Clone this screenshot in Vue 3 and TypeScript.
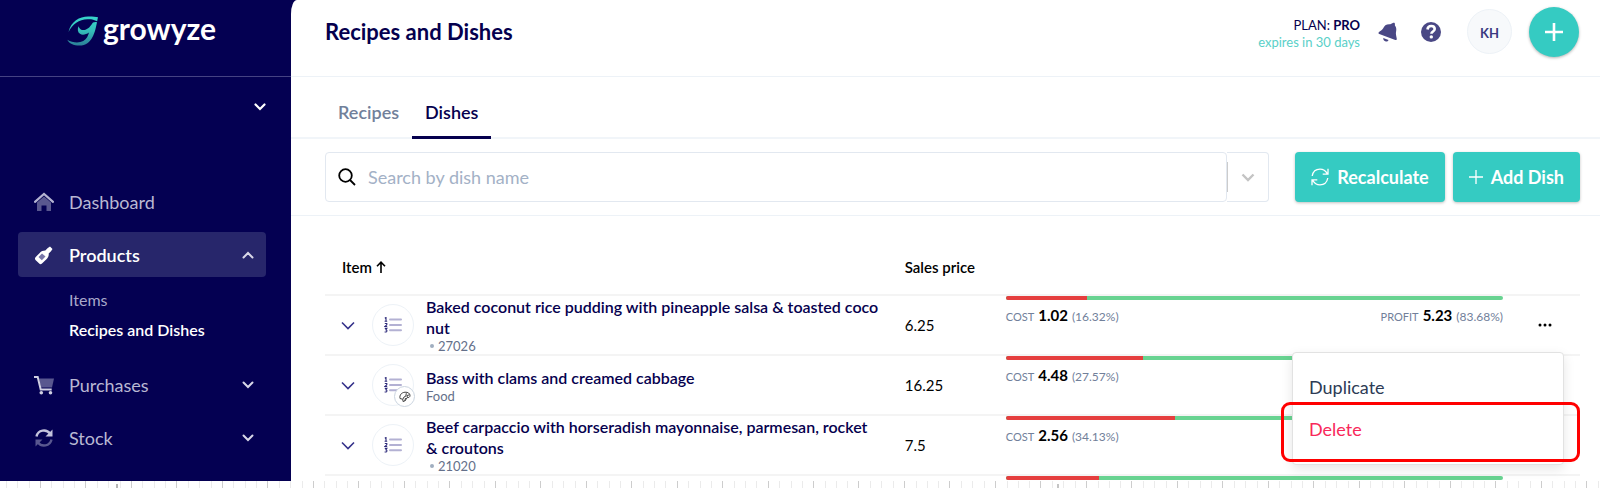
<script setup lang="ts">
import { ref } from 'vue'

interface Dish {
  name: string
  code?: string
  category?: string
  price: string
  cost: string
  costShare: number
  profit: string
  profitShare: number
}

const dishes: Dish[] = [
  { name: 'Baked coconut rice pudding with pineapple salsa & toasted coco\nnut', code: '27026', price: '6.25', cost: '1.02', costShare: 16.32, profit: '5.23', profitShare: 83.68 },
  { name: 'Bass with clams and creamed cabbage', category: 'Food', price: '16.25', cost: '4.48', costShare: 27.57, profit: '', profitShare: 72.43 },
  { name: 'Beef carpaccio with horseradish mayonnaise, parmesan, rocket\n& croutons', code: '21020', price: '7.5', cost: '2.56', costShare: 34.13, profit: '', profitShare: 65.87 },
]
const nextShare = 18.8

const search = ref('')
const openMenu = ref(0)

const majorTicks = Array.from({ length: 60 }, (_, i) => 40 + Math.round(i * 45.47))
const minorTicks = Array.from({ length: 240 }, (_, i) => i)
  .filter((i) => i % 4 !== 3)
  .map((i) => 6 + Math.round(i * 11.37))
</script>

<template>
  <div class="screen">
    <div class="app">
      <aside class="sidebar">
        <a class="brand" href="#">
          <svg class="brand-mark" viewBox="0 0 32 30" aria-hidden="true">
            <defs>
              <linearGradient id="mark" x1="0" y1="0" x2="0" y2="1">
                <stop offset="0" stop-color="#38d6cc" />
                <stop offset="0.5" stop-color="#34bdb9" />
                <stop offset="1" stop-color="#2c7f98" />
              </linearGradient>
            </defs>
            <path fill="url(#mark)" d="M1.500 16C4 5 13 .2 22 .5c4 0 7 .3 9 .8-.5 1.300-.4 2.600-.8 4-3.200-1.700-6-2.300-9.700-2.100C12 3.500 5.500 8 1.500 16zM30 6.200c-1.800 9-4.500 23.300-17.500 23.300C6.500 29.500 2 27.500.3 23.700c4.700 3 11.700 3.600 16 1.300 3.500-1.900 4.900-5.500 5.700-8.500-3 2.200-6.800 2.800-9 1.300-2.400-1.600-2.700-4.600-1.500-7.600 1.200 3.300 4 4.600 7 3.500C22.500 12.400 24.500 8.500 26 6.500c1.300-.6 2.800-.7 4-.3z" />
          </svg>
          <span class="brand-name">growyze</span>
        </a>
        <button class="venue" type="button" aria-label="Choose venue">
          <svg class="chev" viewBox="0 0 12 8" aria-hidden="true"><path d="M1.500 1.500 6 6l4.500-4.500" stroke-width="2.200" /></svg>
        </button>
        <nav class="nav">
          <a class="nav-item" href="#">
            <svg class="nav-icon" viewBox="0 0 20 20" aria-hidden="true">
              <path d="M3 10.500 10 4.500l7 6V19h-4.500v-5.500h-5V19H3z" fill="#59578f" />
              <path d="M1 9.800 10 2l9 7.800" fill="none" stroke="#b4b3d2" stroke-width="2.200" stroke-linecap="round" />
            </svg>
            <span>Dashboard</span>
          </a>
          <button class="nav-item active" type="button">
            <svg class="nav-icon" viewBox="0 0 20 20" aria-hidden="true">
              <path d="M16 1.500 18.500 4 17 6.200l-2.300 2.300c.3 3-1 4.500-2.500 6L8 18.600c-1 .8-2 .8-2.800 0L1.500 15c-.7-.9-.7-1.900 0-2.800l4.200-4.300c1.600-1.500 3.200-2.300 5.600-2.300l2.500-2.500z" fill="#fff" />
              <path d="m8 8.500 3.500 3-3.700 3.700-3.300-3.300z" fill="#7776a8" />
            </svg>
            <span>Products</span>
            <svg class="chev end" viewBox="0 0 12 8" aria-hidden="true"><path d="M1.500 6.500 6 2l4.500 4.500" stroke-width="2" /></svg>
          </button>
          <ul class="sub">
            <li><a href="#">Items</a></li>
            <li><a class="current" href="#">Recipes and Dishes</a></li>
          </ul>
          <button class="nav-item" type="button">
            <svg class="nav-icon" viewBox="0 0 20 20" aria-hidden="true">
              <path d="M5 3.500h15l-2 9H7z" fill="#59578f" />
              <path d="M0 2h3.700l3 12.500h11" fill="none" stroke="#d0cfe2" stroke-width="2" />
              <circle cx="7.300" cy="17.700" r="1.800" fill="#d0cfe2" /><circle cx="16.500" cy="17.700" r="1.800" fill="#d0cfe2" />
            </svg>
            <span>Purchases</span>
            <svg class="chev end" viewBox="0 0 12 8" aria-hidden="true"><path d="M1.500 1.500 6 6l4.500-4.500" stroke-width="2" /></svg>
          </button>
          <button class="nav-item" type="button">
            <svg class="nav-icon" viewBox="0 0 20 20" aria-hidden="true">
              <path d="M2.500 8.500C4 1.500 12.500.8 16 5.500" fill="none" stroke="#c3c2dc" stroke-width="2.400" />
              <path d="M18.500 1.500v7h-7z" fill="#c3c2dc" />
              <path d="M17.500 11.500c-1.500 7-10 7.700-13.500 3" fill="none" stroke="#59578f" stroke-width="2.400" />
              <path d="M1.500 18.500v-7h7z" fill="#59578f" />
            </svg>
            <span>Stock</span>
            <svg class="chev end" viewBox="0 0 12 8" aria-hidden="true"><path d="M1.500 1.500 6 6l4.500-4.500" stroke-width="2" /></svg>
          </button>
        </nav>
      </aside>

      <main class="main">
        <header class="top">
          <h1>Recipes and Dishes</h1>
          <div class="plan">
            <span>PLAN: <b>PRO</b></span>
            <a href="#">expires in 30 days</a>
          </div>
          <button class="icon-btn bell" type="button" aria-label="Notifications">
            <svg viewBox="0 0 20 20" aria-hidden="true">
              <path d="M15.300.8c.8-.4 1.600.1 1.600 1v1.700c2.200 2.500 1.200 5.500 1 8 .1 2.200.8 3.700.9 5.500 0 1-.7 1.300-1.500 1L1.300 12c-.8-.3-1.100-1.100-.5-1.800 1.500-1.500 3.300-2 4.400-4C6.300 3.500 8.500 1.800 12.300 2.200zM5.300 16l5.200 1.900c-.5 1.300-1.800 1.900-3.200 1.400S5 17.500 5.300 16z" fill="#4a4885" />
            </svg>
          </button>
          <button class="icon-btn help" type="button" aria-label="Help">
            <svg viewBox="0 0 20 20" aria-hidden="true">
              <circle cx="10" cy="10" r="10" fill="#4a4885" />
              <path d="M6.500 7.500C6.800 4.700 8.500 4 10.200 4c2 0 3.500 1.200 3.500 3 0 2.500-3.300 2.500-3.300 4.800" fill="none" stroke="#fff" stroke-width="2.600" />
              <circle cx="10.300" cy="14.900" r="1.700" fill="#fff" />
            </svg>
          </button>
          <button class="avatar" type="button">KH</button>
          <button class="create" type="button" aria-label="Create">
            <svg viewBox="0 0 18 18" aria-hidden="true"><path d="M9 0v18M0 9h18" stroke="#fff" stroke-width="2.600" /></svg>
          </button>
        </header>

        <nav class="tabs">
          <a href="#">Recipes</a>
          <a class="selected" href="#">Dishes</a>
        </nav>

        <div class="toolbar">
          <div class="search">
            <label class="field">
              <svg viewBox="0 0 18 18" aria-hidden="true">
                <circle cx="7.500" cy="7.500" r="6.300" /><path d="m12 12 5 5" />
              </svg>
              <input v-model="search" type="text" placeholder="Search by dish name" aria-label="Search by dish name" />
            </label>
            <button class="filter" type="button" aria-label="Filters">
              <svg viewBox="0 0 14 9" aria-hidden="true"><path d="m1.500 1.500 5.500 5.500 5.500-5.500" /></svg>
            </button>
          </div>
          <button class="primary" type="button">
            <svg viewBox="0 0 18 18" aria-hidden="true">
              <path d="M1.200 8C2 3.500 5.300 1.200 9 1.200c3.300 0 5.800 1.800 7.300 4.600M17 .8v5.400h-5.300M16.800 10c-.8 4.500-4.100 6.800-7.800 6.800-3.300 0-5.800-1.800-7.300-4.600M1 17.200v-5.400h5.300" />
            </svg>
            Recalculate
          </button>
          <button class="primary" type="button">
            <svg class="plus" viewBox="0 0 14 14" aria-hidden="true"><path d="M7 0v14M0 7h14" /></svg>
            Add Dish
          </button>
        </div>

        <div class="list">
          <table>
            <colgroup>
              <col class="c-item" /><col class="c-price" /><col /><col class="c-actions" />
            </colgroup>
            <thead>
              <tr>
                <th scope="col">
                  Item
                  <svg class="sort" viewBox="0 0 10 12" aria-hidden="true"><path d="M5 12V1.500M1 5.200l4-4 4 4" /></svg>
                </th>
                <th scope="col">Sales price</th>
                <td></td>
                <td></td>
              </tr>
            </thead>
            <tbody>
              <tr v-for="(dish, i) in dishes" :key="dish.name">
                <td>
                  <div class="item">
                    <button class="expand" type="button" :aria-label="'Expand ' + dish.name">
                      <svg viewBox="0 0 14 9" aria-hidden="true"><path d="m1 1.500 6 6 6-6" /></svg>
                    </button>
                    <span class="thumb">
                      <svg class="steps" viewBox="0 0 18 16" aria-hidden="true">
                        <path d="M6 2.500h11M6 8h11M6 13.200h11" stroke="#b3b1d3" stroke-width="2" stroke-linecap="round" />
                        <path d="M.8 1.200 2 .5v3.700M.6 4.300h2.600M.8 6.500h2v1.300L.8 9.500h2.400M.8 11.400h2.100l-1 1.400c1.500.2 1.300 2.200-.2 2.200H.6" fill="none" stroke="#2d2a7a" stroke-width="1.100" />
                      </svg>
                      <span v-if="dish.category" class="badge">
                        <svg viewBox="0 0 12 12" aria-hidden="true">
                          <path d="M1 7.500C.3 4 2.500 1.500 6 1.200c3-.2 5 1.300 5 3.300 0 1.800-1.500 2.300-2.700 2L5.800 10 4 10.500 3.800 8.300zM3.800 8.300 5 6l1.800-.8.500-3M8.300 6.500 8 4.500l2.500-.7M5.800 10l.7-3" />
                        </svg>
                      </span>
                    </span>
                    <div class="text">
                      <a class="name" href="#">{{ dish.name }}</a>
                      <span v-if="dish.category" class="meta">{{ dish.category }}</span>
                      <span v-else class="meta code"><i></i>{{ dish.code }}</span>
                    </div>
                  </div>
                </td>
                <td class="price">{{ dish.price }}</td>
                <td class="margin">
                  <div class="bar"><span :style="{ width: dish.costShare + '%' }"></span></div>
                  <div class="figures">
                    <span class="figure"><small>COST</small><b>{{ dish.cost }}</b><em>({{ dish.costShare }}%)</em></span>
                    <span v-if="dish.profit" class="figure"><small>PROFIT</small><b>{{ dish.profit }}</b><em>({{ dish.profitShare }}%)</em></span>
                  </div>
                </td>
                <td class="actions">
                  <button v-if="openMenu === i" class="more" type="button" aria-label="More actions">
                    <svg viewBox="0 0 14 4" aria-hidden="true"><circle cx="2" cy="2" r="1.500" /><circle cx="7" cy="2" r="1.500" /><circle cx="12" cy="2" r="1.500" /></svg>
                  </button>
                  <div v-if="openMenu === i" class="menu">
                    <button type="button">Duplicate</button>
                    <button class="danger" type="button">Delete</button>
                    <div class="marker"></div>
                  </div>
                </td>
              </tr>
              <tr>
                <td></td>
                <td></td>
                <td class="margin"><div class="bar"><span :style="{ width: nextShare + '%' }"></span></div></td>
                <td></td>
              </tr>
            </tbody>
          </table>
        </div>
      </main>
    </div>

    <svg class="ruler" aria-hidden="true">
      <rect v-for="x in minorTicks" :key="'n' + x" :x="x" y="0" width="1" height="7" fill="#ebebeb" />
      <rect v-for="x in majorTicks" :key="'m' + x" :x="x" y="0" width="1" height="7" fill="#cdcdcd" />
      <rect x="116" y="3" width="2" height="4" fill="#b5b5b5" />
      <rect x="1057" y="3" width="2" height="4" fill="#c5c5c5" />
    </svg>
  </div>
</template>

<style>
body {
  margin: 0;
  background: #fff;
}
</style>

<style scoped>
* {
  box-sizing: border-box;
}
.screen {
  display: flex;
  flex-direction: column;
  height: 100vh;
  overflow: hidden;
  font-family: Lato, 'Open Sans', sans-serif;
  font-size: 18px;
  color: #05004e;
}
button,
input {
  font: inherit;
  color: inherit;
  border: 0;
  background: none;
  padding: 0;
  margin: 0;
}
a {
  color: inherit;
  text-decoration: none;
}
svg {
  display: block;
  flex: none;
}
.app {
  flex: 1;
  min-height: 0;
  display: grid;
  grid-template-columns: 291px minmax(0, 1fr);
  overflow: hidden;
  background: #040052;
}
.ruler {
  width: 100%;
  height: 7px;
}

/* Sidebar */
.brand {
  display: flex;
  align-items: center;
  gap: 4px;
  height: 77px;
  padding: 0 0 14px 67px;
  border-bottom: 1px solid #454283;
}
.brand-mark {
  width: 32px;
  height: 30px;
}
.brand-name {
  color: #fff;
  font-size: 30px;
  font-weight: 700;
  line-height: 32px;
  padding-bottom: 6px;
}
.venue {
  display: flex;
  align-items: center;
  justify-content: flex-end;
  width: 100%;
  height: 60px;
  padding-right: 25px;
  color: #fff;
}
.chev {
  width: 12px;
  height: 8px;
  fill: none;
  stroke: currentColor;
  stroke-linecap: round;
}
.nav {
  display: flex;
  flex-direction: column;
  gap: 8px;
  padding: 42px 25px 0 18px;
}
.nav-item {
  display: flex;
  align-items: center;
  gap: 15px;
  height: 45px;
  padding: 0 12px 0 16px;
  border-radius: 4px;
  color: #b9b8d3;
}
.nav-item.active {
  background: #27266b;
  color: #fff;
  font-weight: 600;
}
.nav-icon {
  width: 20px;
  height: 20px;
}
.chev.end {
  margin-left: auto;
  color: #d8d7e8;
}
.sub {
  list-style: none;
  margin: 0;
  padding: 0 0 9px 51px;
  font-size: 16px;
  line-height: 30px;
  color: #a9a8ca;
}
.sub a {
  display: block;
}
.sub .current {
  color: #fff;
  font-weight: 600;
}

/* Main column */
.main {
  min-width: 0;
  background: #fff;
  border-top-left-radius: 6px 14px;
}
.top {
  display: flex;
  align-items: center;
  height: 77px;
  padding: 0 21px 13px 34px;
  border-bottom: 1px solid #edf2f7;
}
h1 {
  margin: 0 auto 0 0;
  font-size: 22px;
  font-weight: 700;
}
.plan {
  display: flex;
  flex-direction: column;
  align-items: flex-end;
  font-size: 13px;
  line-height: 17px;
  padding-top: 5px;
}
.plan a {
  color: #5ad0c8;
}
.icon-btn svg {
  width: 20px;
  height: 20px;
}
.bell {
  margin-left: 18px;
}
.help {
  margin-left: 23px;
}
.avatar {
  width: 45px;
  height: 45px;
  margin-left: 26px;
  padding-top: 2px;
  border: 1px solid #edf2f7;
  border-radius: 50%;
  background: #f7f9fb;
  color: #3b3981;
  font-size: 13px;
  font-weight: 700;
}
.create {
  display: grid;
  place-items: center;
  width: 50px;
  height: 50px;
  margin-left: 17px;
  border-radius: 50%;
  background: #35cbc2;
  box-shadow: 0 1px 3px rgba(0, 0, 0, 0.3);
}
.create svg {
  width: 18px;
  height: 18px;
}
.tabs {
  display: flex;
  padding-left: 34px;
  height: 62px;
  border-bottom: 2px solid #f1f5f9;
  font-weight: 600;
  color: #71809a;
}
.tabs a {
  height: 62px;
  padding: 0 13px;
  line-height: 70px;
}
.tabs .selected {
  color: #05004e;
  border-bottom: 3px solid #05004e;
}
.toolbar {
  display: flex;
  gap: 8px;
  padding: 13px 20px;
  border-bottom: 1px solid #edf2f7;
}
.search {
  flex: 1;
  display: flex;
  margin: 0 18px 0 14px;
}
.field {
  flex: 1;
  display: flex;
  align-items: center;
  gap: 12px;
  height: 50px;
  padding-left: 12px;
  border: 1px solid #e2e8f0;
  border-radius: 4px;
}
.field svg {
  width: 18px;
  height: 18px;
  fill: none;
  stroke: #000;
  stroke-width: 1.8;
}
.field input {
  flex: 1;
  min-width: 0;
  height: 40px;
  outline: none;
}
.field input::placeholder {
  color: #a3b1c6;
  opacity: 1;
}
.filter {
  display: grid;
  place-items: center;
  width: 42px;
  border: 1px solid #e2e8f0;
  border-left: 0;
  border-radius: 0 4px 4px 0;
  background: linear-gradient(#ccc, #ccc) left center / 1px 30px no-repeat;
}
.filter svg {
  width: 14px;
  height: 9px;
  fill: none;
  stroke: #c4c4c4;
  stroke-width: 2.4;
}
.primary {
  display: flex;
  align-items: center;
  gap: 8px;
  height: 50px;
  padding: 0 16px;
  border-radius: 4px;
  background: #35cbc2;
  box-shadow: 0 1px 3px rgba(0, 0, 0, 0.25);
  color: #fff;
  font-weight: 700;
}
.primary svg {
  width: 18px;
  height: 18px;
  fill: none;
  stroke: #fff;
  stroke-width: 1.3;
}
.primary .plus {
  width: 14px;
  height: 14px;
}

/* Table */
.list {
  padding: 26px 20px 0 34px;
}
table {
  width: 100%;
  table-layout: fixed;
  border-collapse: separate;
  border-spacing: 0;
}
.c-item {
  width: 45%;
}
.c-price {
  width: 116px;
}
.c-actions {
  width: 77px;
}
th,
td {
  padding: 0;
  text-align: left;
}
tr > * {
  border-bottom: 2px solid #f4f4f4;
}
thead th,
thead td {
  height: 54px;
  color: #000;
  font-size: 15px;
  font-weight: 600;
}
thead th {
  padding: 0 15px 2px;
}
thead th:first-child {
  padding-left: 17px;
}
.sort {
  display: inline-block;
  width: 10px;
  height: 12px;
  fill: none;
  stroke: #000;
  stroke-width: 1.6;
}
tbody td {
  height: 60px;
}
.item {
  display: flex;
  align-items: center;
  height: 58px;
  padding-left: 16px;
}
.expand svg {
  width: 14px;
  height: 9px;
  fill: none;
  stroke: #35328a;
  stroke-width: 1.6;
}
.thumb {
  position: relative;
  display: grid;
  place-items: center;
  flex: none;
  width: 42px;
  height: 42px;
  margin: 0 12px 0 17px;
  border: 1px solid #edf2f7;
  border-radius: 50%;
}
.steps {
  width: 18px;
  height: 16px;
}
.badge {
  position: absolute;
  right: -2px;
  bottom: -2px;
  display: grid;
  place-items: center;
  width: 21px;
  height: 21px;
  border: 1px solid #cbd5e0;
  border-radius: 50%;
  background: #fff;
}
.badge svg {
  width: 12px;
  height: 12px;
  fill: none;
  stroke: #444;
  stroke-width: 1;
}
.text {
  display: flex;
  flex-direction: column;
  min-width: 0;
}
.name {
  font-size: 16px;
  font-weight: 600;
  line-height: 21px;
  white-space: pre;
}
.meta {
  font-size: 13px;
  line-height: 16px;
  color: #64708a;
}
.code {
  display: flex;
  align-items: center;
  gap: 4px;
  padding-left: 4px;
}
.code i {
  width: 4px;
  height: 4px;
  border-radius: 50%;
  background: #a0aec0;
}
.price {
  padding-left: 15px;
  color: #000;
  font-size: 15px;
}
.margin {
  vertical-align: top;
}
.bar {
  height: 4px;
  border-radius: 2px;
  overflow: hidden;
  background: #68d391;
}
.bar span {
  display: block;
  height: 100%;
  background: #e53e3e;
}
.figures {
  display: flex;
  justify-content: space-between;
  padding-top: 5px;
  line-height: 20px;
  color: #71809a;
}
.figure {
  display: flex;
  align-items: baseline;
  gap: 4px;
}
.figure small {
  font-size: 11px;
}
.figure b {
  color: #000;
  font-size: 15px;
}
.figure em {
  font-size: 12px;
  font-style: normal;
}
.actions {
  position: relative;
  padding-left: 35px;
}
.more {
  display: block;
  padding: 8px 0;
}
.more svg {
  width: 14px;
  height: 4px;
  fill: #000;
}
.menu {
  position: absolute;
  z-index: 1;
  top: 56px;
  right: 16px;
  width: 272px;
  padding: 13px 0 14px;
  border: 1px solid #e2e2e2;
  border-radius: 4px;
  background: #fff;
  box-shadow: 0 4px 12px rgba(0, 0, 0, 0.1);
}
.menu button {
  display: block;
  width: 100%;
  height: 42px;
  padding-left: 16px;
  text-align: left;
  color: #2d3b55;
}
.menu .danger {
  color: #f8285a;
}
.marker {
  position: absolute;
  inset: 49px -17px 2px -12px;
  border: 3px solid #f00;
  border-radius: 9px;
}
</style>
